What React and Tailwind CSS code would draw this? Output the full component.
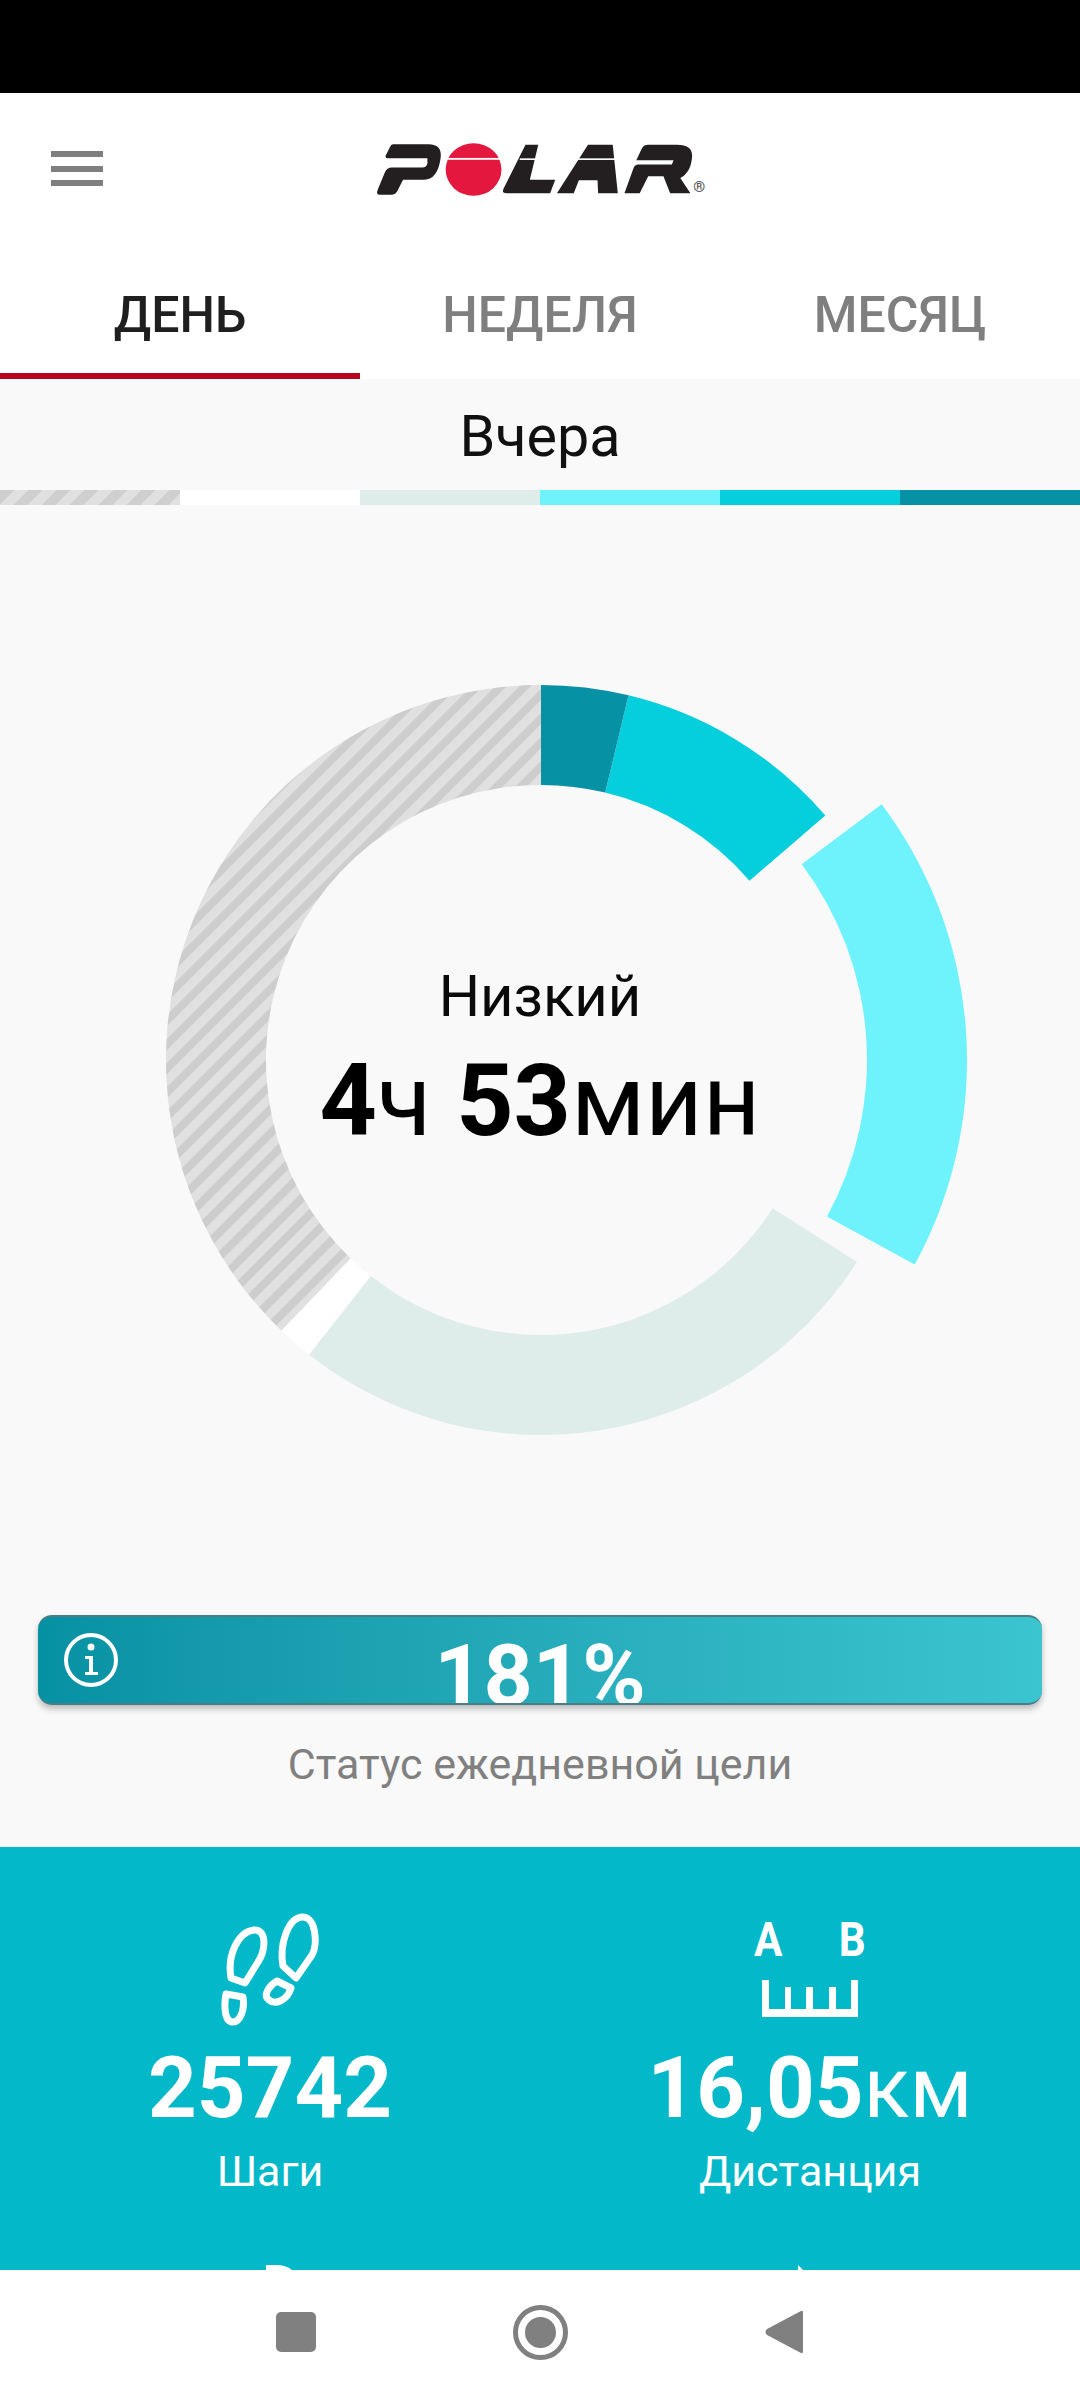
import React from "react";

const polar = (r, deg) => {
  const a = (deg * Math.PI) / 180;
  return [426 + r * Math.sin(a), 426 - r * Math.cos(a)];
};
const arc = (r0, r1, a0, a1) => {
  const [x0, y0] = polar(r1, a0);
  const [x1, y1] = polar(r1, a1);
  const [x2, y2] = polar(r0, a1);
  const [x3, y3] = polar(r0, a0);
  const large = a1 - a0 > 180 ? 1 : 0;
  return `M${x0} ${y0}A${r1} ${r1} 0 ${large} 1 ${x1} ${y1}L${x2} ${y2}A${r0} ${r0} 0 ${large} 0 ${x3} ${y3}Z`;
};

const SEGMENTS = [
  { r0: 275, r1: 375, a0: 223.8, a1: 360, fill: "url(#stripes)" },
  { r0: 275, r1: 375, a0: 218.2, a1: 223.8, fill: "#ffffff" },
  { r0: 275, r1: 375, a0: 122.6, a1: 218.2, fill: "#deecea" },
  { r0: 326, r1: 426, a0: 53.1, a1: 118.7, fill: "#6ef2fc" },
  { r0: 275, r1: 375, a0: 13.5, a1: 49.3, fill: "#05cedd" },
  { r0: 275, r1: 375, a0: 0, a1: 13.5, fill: "#0791a4" },
];

function Donut() {
  return (
    <svg width="852" height="852" viewBox="0 0 852 852">
      <defs>
        <pattern id="stripes" width="17" height="17" patternUnits="userSpaceOnUse" patternTransform="rotate(45)">
          <rect width="17" height="17" fill="#e0e0e0" />
          <rect width="8" height="17" fill="#cdcdcd" />
        </pattern>
      </defs>
      {SEGMENTS.map((s, i) => (
        <path key={i} d={arc(s.r0, s.r1, s.a0, s.a1)} fill={s.fill} />
      ))}
    </svg>
  );
}

function Logo() {
  return (
    <svg width="346" height="71" viewBox="0 0 340 70">
      <path
        d="M25 10H60Q74 10 72 24Q69 45 56 45H35L29 57Q27 60 24 60H12Q8 60 10 55L17 38Q19 33 24 33H54Q58 33 59 29L59 24H20Q17 24 18 21L22 13Q23 10 25 10Z"
        fill="#231f20"
      />
      <ellipse cx="104.5" cy="35" rx="27.5" ry="26" fill="#e4173e" />
      <rect x="76" y="23.6" width="57" height="1.8" fill="#ffffff" />
      <path d="M155.7 10.7H168.3L160 45H185L180 58.3H137Q132 58.3 134 54Z" fill="#231f20" />
      <path d="M186.7 58.3H203.3L208.3 45.7H226.7L227.3 58.3H246.7L241.7 10.7H217.3Z" fill="#231f20" />
      <path
        d="M276.7 10.7H305Q320 10.7 320 21.7Q319 38 308.3 43.3L318.3 58.3H298.3L291.7 41.7H276.7L268.3 58.3H253.3L261.7 35Q263 30 267 30H300L301.7 26H265L270 15Q272 10.7 276.7 10.7Z"
        fill="#231f20"
      />
      <rect x="150" y="24" width="18" height="1.6" fill="#ffffff" />
      <rect x="205" y="24" width="40" height="1.6" fill="#ffffff" />
      <text x="327" y="57" textAnchor="middle" fontFamily="Roboto" fontSize="15" fill="#4a4a4a">®</text>
    </svg>
  );
}

function Steps() {
  return (
    <svg width="110" height="125" viewBox="0 0 110 125" fill="none" stroke="#ffffff" strokeWidth="7" strokeLinejoin="round" className="mt-[-9px]">
      <path d="M68 61C64 40 73 12 88 12C101 12 103 40 97 50L81 73Z" />
      <path d="M16 73C12 50 23 27 39 25C52 24 51 45 43 57L30 78Z" />
      <path d="M62 76L76 83C72 96 60 100 54 95C47 90 55 80 62 76Z" />
      <path d="M11 89L28 92C30 105 25 117 18 117C9 117 9 100 11 89Z" />
    </svg>
  );
}

function Ruler() {
  return (
    <svg width="96" height="37" viewBox="0 0 96 37" fill="#ffffff">
      <path d="M0 0H7V29H23V7H29V29H44V7H51V29H67V7H74V29H89V0H96V37H0Z" />
    </svg>
  );
}

function InfoIcon() {
  return (
    <svg width="56" height="56" viewBox="0 0 56 56" fill="none">
      <circle cx="28" cy="28" r="25" stroke="#ffffff" strokeWidth="4" />
      <circle cx="28" cy="15" r="3.5" fill="#ffffff" />
      <path d="M22 24H30V40H35V43H22V40H26V27H22Z" fill="#ffffff" />
    </svg>
  );
}

function Stat({ icon, value, unit, label }) {
  return (
    <div className="flex flex-col items-center">
      <div className="h-[132px] flex justify-center">{icon}</div>
      <div className="text-[85px] leading-[84px] font-bold text-white whitespace-nowrap">
        {value}
        {unit && <span className="font-normal">{unit}</span>}
      </div>
      <div className="mt-[16px] text-[43px] leading-[50px] text-white">{label}</div>
    </div>
  );
}

export default function App() {
  return (
    <div className="w-[1080px] h-[2400px] overflow-hidden flex flex-col bg-white font-[Roboto,sans-serif]">
      <div className="h-[93px] bg-black shrink-0" />

      <header className="h-[152px] shrink-0 relative flex items-center justify-center bg-white">
        <div className="absolute left-[51px] top-[58px] w-[52px] flex flex-col gap-[8.5px]">
          <div className="h-[6px] bg-[#7f7f7f]" />
          <div className="h-[6px] bg-[#7f7f7f]" />
          <div className="h-[6px] bg-[#7f7f7f]" />
        </div>
        <Logo />
      </header>

      <nav className="h-[134px] shrink-0 grid grid-cols-3 bg-white text-[50px] leading-[60px] font-medium text-center">
        <div className="pt-[40px] text-[#1f1f1f] border-b-[6px] border-[#b8051f]">ДЕНЬ</div>
        <div className="pt-[40px] text-[#7f7f7f]">НЕДЕЛЯ</div>
        <div className="pt-[40px] text-[#7f7f7f]">МЕСЯЦ</div>
      </nav>

      <div className="h-[111px] shrink-0 flex items-center justify-center pt-[5px] bg-[#f9f9f9] text-[57.5px] text-[#111111]">
        Вчера
      </div>

      <div className="h-[15px] shrink-0 grid grid-cols-6 shadow-[inset_0_2px_2px_rgba(0,0,0,0.08)]">
        <div className="bg-[repeating-linear-gradient(135deg,#cfcfcf_0_10px,#e0e0e0_10px_20px)]" />
        <div className="bg-white" />
        <div className="bg-[#deecea]" />
        <div className="bg-[#6ef2fc]" />
        <div className="bg-[#05cedd]" />
        <div className="bg-[#0791a4]" />
      </div>

      <main className="h-[1342px] shrink-0 bg-[#f9f9f9] flex flex-col items-center pt-[129px]">
        <div className="relative w-[852px] h-[852px] ml-[2px]">
          <Donut />
          <div className="absolute inset-0 flex flex-col items-center justify-center pr-[2px] pb-[2px]">
            <div className="text-[58px] leading-[66px] text-[#0a0a0a]">Низкий</div>
            <div className="mt-[17px] text-[100px] leading-[110px] text-black whitespace-nowrap">
              <span className="font-bold">4</span>ч <span className="font-bold">53</span>мин
            </div>
          </div>
        </div>

        <div className="relative mt-[129px] w-[1004px] h-[90px] rounded-[14px] overflow-hidden border-y-2 border-[#4c7d85] bg-gradient-to-r from-[#0691a3] to-[#3bc5d0] shadow-[0_4px_6px_rgba(0,0,0,0.25)]">
          <div className="absolute left-[25px] top-[15px]">
            <InfoIcon />
          </div>
          <div className="text-center text-[86px] leading-[100px] font-bold text-white mt-[9px]">181%</div>
        </div>

        <div className="mt-[34px] text-[43px] leading-[50px] text-[#808080]">Статус ежедневной цели</div>
      </main>

      <section className="h-[423px] shrink-0 overflow-hidden bg-[#03b8c9] pt-[67px]">
        <div className="grid grid-cols-2">
          <Stat icon={<Steps />} value="25742" label="Шаги" />
          <Stat
            icon={
              <div className="w-[116px] pt-[8px] flex flex-col items-center">
                <div className="w-full flex justify-between text-[48px] leading-[35px] font-bold text-white">
                  <span className="inline-block scale-x-[0.88]">A</span>
                  <span className="inline-block scale-x-[0.88]">B</span>
                </div>
                <div className="mt-[23px]">
                  <Ruler />
                </div>
              </div>
            }
            value="16,05"
            unit="км"
            label="Дистанция"
          />
        </div>
        <div className="grid grid-cols-2 mt-[69px]">
          <div className="flex justify-center">
            <svg width="28" height="10" viewBox="0 0 28 10" className="ml-[20px]">
              <path d="M0 0H10Q22 0 28 7V10H0Z" fill="#ffffff" />
            </svg>
          </div>
          <div className="flex justify-center">
            <svg width="10" height="10" viewBox="0 0 10 10" className="ml-[-14px]">
              <path d="M0 0L8 8V10H0Z" fill="#ffffff" />
            </svg>
          </div>
        </div>
      </section>

      <footer className="flex-1 bg-white flex items-center justify-center pb-[6px]">
        <div className="w-[244px] flex justify-center">
          <div className="w-[40px] h-[40px] rounded-[5px] bg-[#808080]" />
        </div>
        <div className="w-[244px] flex justify-center">
          <div className="w-[55px] h-[55px] rounded-full border-[5px] border-[#808080] flex items-center justify-center">
            <div className="w-[31px] h-[31px] rounded-full bg-[#808080]" />
          </div>
        </div>
        <div className="w-[244px] flex justify-center">
          <svg width="40" height="46" viewBox="0 0 40 46">
            <path d="M37 2Q39 1 39 4V42Q39 45 37 44L3 26Q0 23 3 20Z" fill="#808080" />
          </svg>
        </div>
      </footer>
    </div>
  );
}
